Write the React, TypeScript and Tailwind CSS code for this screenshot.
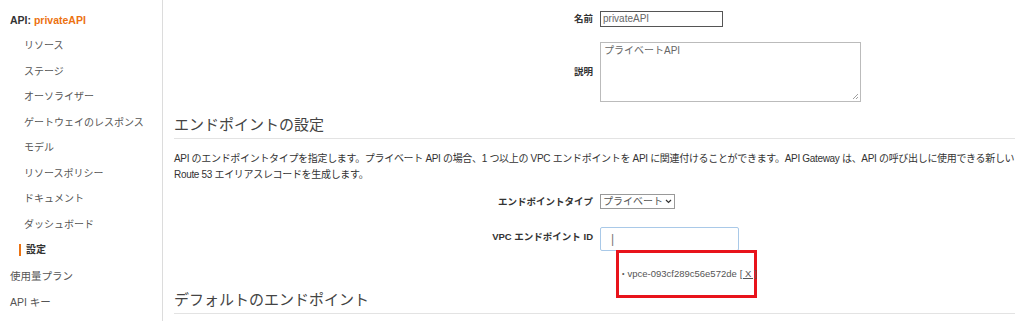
import { ReactNode } from 'react';

const FONT = '"Liberation Sans", "Noto Sans CJK JP", sans-serif';

const subItems = [
  'リソース',
  'ステージ',
  'オーソライザー',
  'ゲートウェイのレスポンス',
  'モデル',
  'リソースポリシー',
  'ドキュメント',
  'ダッシュボード',
];

const Sidebar = () => (
  <aside className="w-[163px] shrink-0 whitespace-nowrap border-r border-[#dcdcdc] pt-[12px] text-[10px] text-[#555]">
    <div className="h-[16px] pl-[10px] text-[10.5px] font-bold leading-[16px] text-[#333]">
      API: <span className="text-[#ec7211]">privateAPI</span>
    </div>
    <ul className="mt-[10px]">
      {subItems.map((item) => (
        <li key={item} className="h-[25.5px] pl-[24px] leading-[16px]">
          {item}
        </li>
      ))}
      <li className="flex h-[26px] items-start pl-[19px] font-bold leading-[16px] text-[#333]">
        <span className="mr-[5px] mt-[2px] h-[12px] w-[2px] bg-[#ec7211]" />
        設定
      </li>
    </ul>
    <div className="h-[26px] pl-[10px] text-[10.5px] leading-[16px]">使用量プラン</div>
    <div className="h-[26px] pl-[10px] text-[10.5px] leading-[16px]">API キー</div>
  </aside>
);

const Row = ({
  label,
  children,
  className = '',
  labelClass = '',
}: {
  label: string;
  children: ReactNode;
  className?: string;
  labelClass?: string;
}) => (
  <div className={`grid grid-cols-[419px_1fr] gap-x-[7px] ${className}`}>
    <div
      className={`whitespace-nowrap text-right text-[9.5px] font-bold leading-[14px] text-[#333] ${labelClass}`}
    >
      {label}
    </div>
    <div>{children}</div>
  </div>
);

const SectionHeading = ({ children }: { children: ReactNode }) => (
  <h2 className="mr-[9px] whitespace-nowrap border-b border-[#e3e3e3] pb-[4px] text-[15px] leading-[18px] text-[#444]">
    {children}
  </h2>
);

export default function App() {
  return (
    <div
      className="flex h-[321px] w-[1024px] overflow-hidden bg-white"
      style={{ fontFamily: FONT }}
    >
      <Sidebar />
      <main className="flex-1 pl-[11px]">
        <Row label="名前" className="mt-[11px] items-center">
          <div className="h-[16px] w-[123px] whitespace-nowrap border border-[#555] px-[2px] text-[10px] leading-[14px] text-[#666]">
            privateAPI
          </div>
        </Row>

        <Row label="説明" className="mt-[15px] items-center">
          <div className="relative h-[60px] w-[261px] whitespace-nowrap border border-[#bbb] px-[3px] pt-[1px] text-[10px] leading-[14px] text-[#666]">
            プライベートAPI
            <svg
              className="absolute bottom-[1px] right-[1px]"
              width="7"
              height="7"
              viewBox="0 0 7 7"
            >
              <path d="M6 1 L1 6 M6 4 L4 6" stroke="#888" strokeWidth="0.8" />
            </svg>
          </div>
        </Row>

        <div className="mt-[14px]">
          <SectionHeading>エンドポイントの設定</SectionHeading>
        </div>

        <p className="mt-[12px] whitespace-nowrap text-[10px] leading-[16px] tracking-[-0.32px] text-[#333]">
          API のエンドポイントタイプを指定します。プライベート API の場合、1 つ以上の VPC
          エンドポイントを API に関連付けることができます。API Gateway は、API
          の呼び出しに使用できる新しい
          <br />
          Route 53 エイリアスレコードを生成します。
        </p>

        <Row label="エンドポイントタイプ" className="mt-[11px] items-center">
          <div className="flex h-[15px] w-[75px] items-center justify-between whitespace-nowrap border border-[#999] pl-[2px] pr-[2px] text-[10px] leading-[13px] text-[#555]">
            <span>プライベート</span>
            <svg width="7" height="5" viewBox="0 0 7 5">
              <path d="M1 1 L3.5 3.5 L6 1" stroke="#333" strokeWidth="1.2" fill="none" />
            </svg>
          </div>
        </Row>

        <Row label="VPC エンドポイント ID" className="mt-[18px] items-start" labelClass="pt-[3px]">
          <div className="h-[24px] w-[139px] rounded-[2px] border border-[#a9c9e8] pl-[10px] pt-[4px] text-[12px] leading-[14px] text-[#777]">
            |
          </div>
          <div className="-mt-[1px] ml-[16px] h-[48px] w-[141px] border-[3px] border-[#e8131b] pl-[3px] pt-[14px]">
            <div className="flex items-center whitespace-nowrap text-[9.5px] leading-[14px] text-[#555]">
              <span className="mr-[3px] text-[7px]">•</span>
              vpce-093cf289c56e572de
              <span className="ml-[3px] underline">[ X ]</span>
            </div>
          </div>
        </Row>

        <div className="-mt-[7px]">
          <SectionHeading>デフォルトのエンドポイント</SectionHeading>
        </div>
      </main>
    </div>
  );
}
